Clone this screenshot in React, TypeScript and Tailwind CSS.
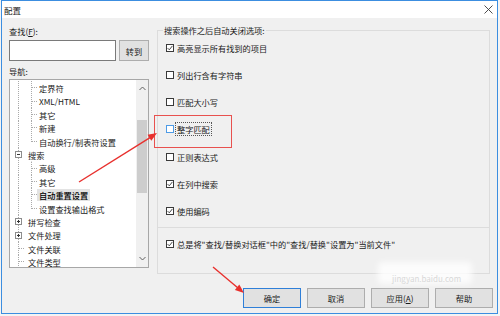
import type { ReactNode } from 'react';

type Kind = 'child' | 'childLast' | 'parentOpen' | 'parentClosed' | 'leaf';

const TREE: { label: string; kind: Kind; selected?: boolean }[] = [
  { label: '定界符', kind: 'child' },
  { label: 'XML/HTML', kind: 'child' },
  { label: '其它', kind: 'child' },
  { label: '新建', kind: 'child' },
  { label: '自动换行/制表符设置', kind: 'childLast' },
  { label: '搜索', kind: 'parentOpen' },
  { label: '高级', kind: 'child' },
  { label: '其它', kind: 'child' },
  { label: '自动重置设置', kind: 'child', selected: true },
  { label: '设置查找输出格式', kind: 'childLast' },
  { label: '拼写检查', kind: 'parentClosed' },
  { label: '文件处理', kind: 'parentClosed' },
  { label: '文件关联', kind: 'leaf' },
  { label: '文件类型', kind: 'leaf' },
];

const OPTIONS: { label: ReactNode; checked?: boolean; focus?: boolean }[] = [
  { label: '高亮显示所有找到的项目', checked: true },
  { label: '列出行含有字符串' },
  { label: '匹配大小写' },
  { label: '整字匹配', focus: true },
  { label: '正则表达式' },
  { label: '在列中搜索', checked: true },
  { label: '使用编码', checked: true },
];

function TreeLines({ kind }: { kind: Kind }) {
  const child = kind === 'child' || kind === 'childLast';
  const parent = kind === 'parentOpen' || kind === 'parentClosed';
  return (
    <svg
      width="30"
      height="13.4"
      viewBox="0 0 30 13.4"
      className="absolute left-0 top-0"
      fill="none"
    >
      <g stroke="#a9a9a9" strokeDasharray="1 1">
        <line x1="8.5" y1="0" x2="8.5" y2="13.4" />
        {kind === 'child' && <line x1="21.5" y1="0" x2="21.5" y2="13.4" />}
        {kind === 'childLast' && <line x1="21.5" y1="0" x2="21.5" y2="7" />}
        {child && <line x1="22" y1="6.5" x2="28" y2="6.5" />}
        {kind === 'leaf' && <line x1="9" y1="6.5" x2="15" y2="6.5" />}
        {kind === 'parentOpen' && <line x1="21.5" y1="11" x2="21.5" y2="13.4" />}
      </g>
      {parent && (
        <g>
          <rect x="5.5" y="3.5" width="6" height="6" fill="#fff" stroke="#8c8c8c" />
          <line x1="7" y1="6.5" x2="10" y2="6.5" stroke="#333" />
          {kind === 'parentClosed' && <line x1="8.5" y1="5" x2="8.5" y2="8" stroke="#333" />}
        </g>
      )}
    </svg>
  );
}

function Check({ checked, focus }: { checked?: boolean; focus?: boolean }) {
  return (
    <span
      className={`flex h-[8px] w-[8px] shrink-0 items-center justify-center border bg-white ${
        focus ? 'border-[#4d9be6]' : 'border-[#3a3a3a]'
      }`}
    >
      {checked && (
        <svg width="6" height="6" viewBox="0 0 6 6" fill="none">
          <path d="M0.6 3.1 L2.3 4.8 L5.4 0.9" stroke="#333" strokeWidth="0.9" />
        </svg>
      )}
    </span>
  );
}

function Btn({ children, primary }: { children: ReactNode; primary?: boolean }) {
  return (
    <div
      className={`flex h-[20px] w-[58px] items-center justify-center border bg-[#e1e1e1] ${
        primary ? 'border-[#2f7fd8]' : 'border-[#adadad]'
      }`}
    >
      {children}
    </div>
  );
}

export default function App() {
  return (
    <div className="relative h-[316px] w-[500px] overflow-hidden bg-[#f4f4f4] font-['Noto_Sans_CJK_SC','Noto_Sans',sans-serif] text-[8.2px] leading-[12px] text-[#1a1a1a]">
      <div className="ml-[1px] flex h-[314px] w-[497px] flex-col border border-[#3c8ee0] bg-[#f0f0f0]">
        {/* Title bar */}
        <div className="flex h-[17px] shrink-0 items-center justify-between bg-white pl-[2px] pr-[4px]">
          <span className="text-[8.5px]">配置</span>
          <svg width="9" height="9" viewBox="0 0 9 9" stroke="#3a3a3a" strokeWidth="0.9">
            <path d="M0.5 0.5 L8.5 8.5 M8.5 0.5 L0.5 8.5" />
          </svg>
        </div>

        <div className="flex gap-[8px] px-[7px]">
          {/* Left: find + navigation tree */}
          <div className="flex w-[140px] flex-col pt-[7px]">
            <div className="h-[12px]">
              查找(<span className="underline">F</span>):
            </div>
            <div className="mt-[3px] flex gap-[3px]">
              <div className="h-[21px] w-[107px] border border-[#7a7a7a] bg-white" />
              <div className="flex h-[21px] flex-1 items-center justify-center border border-[#adadad] bg-[#e1e1e1]">
                转到
              </div>
            </div>
            <div className="mt-[4px] h-[12px]">导航:</div>
            <div className="mt-[2px] flex h-[189px] border border-[#a7a7a7] bg-white">
              <div className="flex-1 overflow-hidden pt-[1.3px]">
                {TREE.map((item, i) => {
                  const child = item.kind === 'child' || item.kind === 'childLast';
                  return (
                    <div key={i} className="relative flex h-[13.4px] items-center">
                      <TreeLines kind={item.kind} />
                      <span
                        className={`whitespace-nowrap ${child ? 'ml-[27px]' : 'ml-[16px]'} ${
                          item.selected ? 'bg-[#e3e3e3] px-[2px] font-medium text-black' : 'px-[2px]'
                        }`}
                      >
                        {item.label}
                      </span>
                    </div>
                  );
                })}
              </div>
              {/* Scrollbar */}
              <div className="flex w-[12px] flex-col bg-[#f0f0f0]">
                <div className="flex h-[17px] items-center justify-center">
                  <svg width="7" height="5" viewBox="0 0 7 5" fill="none" stroke="#606060">
                    <path d="M0.5 4 L3.5 1 L6.5 4" />
                  </svg>
                </div>
                <div className="flex-1 px-[1px]">
                  <div className="mt-[23px] h-[73px] bg-[#cdcdcd]" />
                </div>
                <div className="flex h-[17px] items-center justify-center">
                  <svg width="7" height="5" viewBox="0 0 7 5" fill="none" stroke="#606060">
                    <path d="M0.5 1 L3.5 4 L6.5 1" />
                  </svg>
                </div>
              </div>
            </div>
          </div>

          {/* Right: options */}
          <div className="flex w-[333px] flex-col pt-[6px]">
            <fieldset className="border border-b-0 border-[#dcdcdc] pb-[9.7px]">
              <legend className="ml-[5px] h-[12px] px-[1px]">搜索操作之后自动关闭选项:</legend>
              <div className="flex flex-col gap-[15.3px] pl-[8px] pt-[5.5px]">
                {OPTIONS.map((o, i) => (
                  <div key={i} className="flex h-[12px] items-center gap-[2px]">
                    <Check checked={o.checked} focus={o.focus} />
                    <span className={o.focus ? 'outline-1 outline-dotted outline-[#555] px-[1px]' : 'px-[1px]'}>
                      {o.label}
                    </span>
                  </div>
                ))}
              </div>
            </fieldset>
            <div className="h-[47px] border border-[#dcdcdc] pl-[8px] pt-[10px]">
              <div className="flex h-[12px] items-center gap-[2px]">
                <Check checked />
                <span className="px-[1px]">总是将"查找/替换对话框"中的"查找/替换"设置为"当前文件"</span>
              </div>
            </div>
          </div>
        </div>

        {/* Dialog buttons */}
        <div className="mt-[14px] flex justify-end gap-[6px] pr-[4px]">
          <Btn primary>确定</Btn>
          <Btn>取消</Btn>
          <Btn>
            应用(<span className="underline">A</span>)
          </Btn>
          <Btn>帮助</Btn>
        </div>
      </div>

      {/* watermark */}
      <div className="pointer-events-none absolute left-[378px] top-[262px] h-[22px] w-[94px] rounded bg-white/80 blur-[3px]" />
      <span className="pointer-events-none absolute left-[392px] top-[274px] text-[8px] leading-[10px] text-[#d8d8d8]">
        jingyan.baidu.com
      </span>

      {/* annotations */}
      <svg className="pointer-events-none absolute left-0 top-0" width="500" height="316" viewBox="0 0 500 316" fill="none">
        <rect x="154.5" y="115.5" width="77" height="32" stroke="#e8514f" strokeWidth="1" />
        <line x1="79" y1="182" x2="150" y2="137.6" stroke="#e8302d" strokeWidth="1.4" />
        <polygon points="157,133 151.3,140.8 147.5,134.8" fill="#e8302d" />
        <line x1="213" y1="267" x2="238" y2="288" stroke="#e8302d" strokeWidth="1.4" />
        <polygon points="244,293 234.9,289.9 239.3,284.5" fill="#e8302d" />
      </svg>
    </div>
  );
}
